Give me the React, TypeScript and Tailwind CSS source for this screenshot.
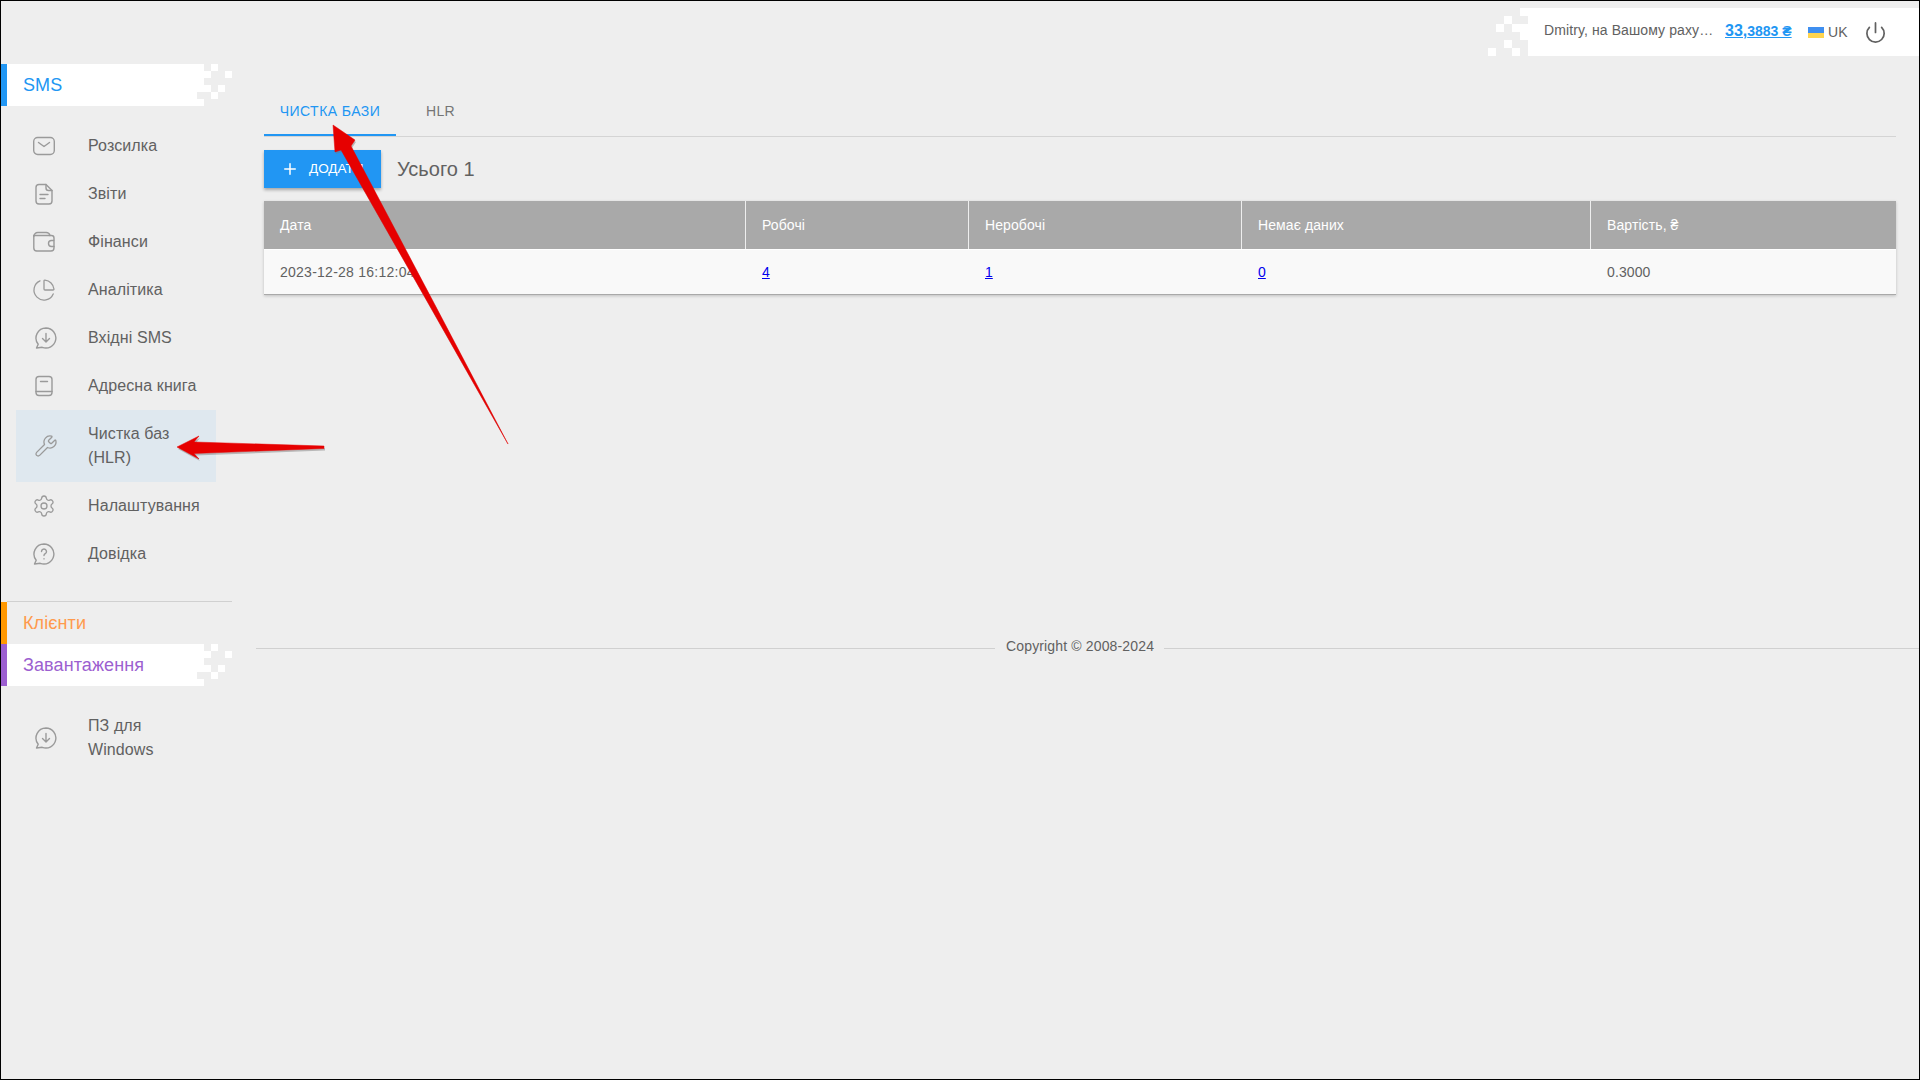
import { ReactNode } from 'react';
import { ChartPie, Plus, Power, Settings, Wrench } from 'lucide-react';

const iconClass = 'w-6 h-6 text-[#9a9a9a]';

function Svg({ children, className = '' }: { children: ReactNode; className?: string }) {
    return (
        <svg viewBox="0 0 24 24" fill="none" stroke="currentColor" strokeWidth="1.4" strokeLinecap="round" strokeLinejoin="round" className={`${iconClass} ${className}`}>
            {children}
        </svg>
    );
}

const MailIcon = () => (
    <Svg>
        <rect x="1.7" y="3.5" width="20.6" height="17" rx="4" />
        <path d="M6.5 8.5l5.5 4 5.5-4" />
    </Svg>
);

const DocIcon = () => (
    <Svg>
        <path d="M7 2.5h7l6 6v10.500a3 3 0 0 1-3 3H7a3 3 0 0 1-3-3v-13.500a3 3 0 0 1 3-3z" />
        <path d="M14 2.500v3.500a2.500 2.500 0 0 0 2.500 2.500H20" />
        <path d="M8 12.500h8M8 16.500h5" />
    </Svg>
);

const WalletIcon = () => (
    <Svg>
        <path d="M22 10V8a2.500 2.500 0 0 0-2.500-2.500H1.800" />
        <path d="M1.800 6.500a4 4 0 0 1 4-4H14a4 4 0 0 1 4 3" />
        <path d="M1.800 6v12a3 3 0 0 0 3 3H19a3 3 0 0 0 3-3v-1.500" />
        <path d="M22 10.500h-2.500a3 3 0 0 0 0 6H22z" />
    </Svg>
);

const InboxBubbleIcon = () => (
    <Svg>
        <path d="M12 2a10 10 0 1 1-3.800 19.300L2.500 22l1.700-3.800A10 10 0 0 1 12 2z" />
        <path d="M12 7.500v8M8.500 12.500l3.500 3.500 3.500-3.500" />
    </Svg>
);

const BookIcon = () => (
    <Svg>
        <rect x="4" y="2.500" width="16" height="19" rx="3" />
        <path d="M4 17.500h16M8.500 7.500h7" />
    </Svg>
);

const QuestionIcon = () => (
    <Svg>
        <path d="M12 2a10 10 0 1 1-3.800 19.300L2.500 22l1.700-3.800A10 10 0 0 1 12 2z" />
        <path d="M9.500 9.500a2.500 2.500 0 1 1 3.800 2.200c-.8.500-1.300 1-1.300 1.800" />
        <path d="M12 16.800v.1" />
    </Svg>
);

const smsItems = [
    { label: 'Розсилка', icon: <MailIcon /> },
    { label: 'Звіти', icon: <DocIcon /> },
    { label: 'Фінанси', icon: <WalletIcon /> },
    { label: 'Аналітика', icon: <ChartPie strokeWidth={1.3} className={iconClass} /> },
    { label: 'Вхідні SMS', icon: <InboxBubbleIcon />, shift: true },
    { label: 'Адресна книга', icon: <BookIcon /> },
    { label: 'Чистка баз (HLR)', icon: <Wrench strokeWidth={1.3} className={iconClass} />, active: true, shift: true },
    { label: 'Налаштування', icon: <Settings strokeWidth={1.3} className={iconClass} /> },
    { label: 'Довідка', icon: <QuestionIcon /> },
];

const columns = ['Дата', 'Робочі', 'Неробочі', 'Немає даних', 'Вартість, ₴'];

// white pixels trailing off the right edge of a section header, col/row in 7px cells
const sideCells = [[0, 0], [2, 0], [0, 1], [1, 1], [4, 1], [0, 2], [0, 3], [1, 3], [3, 3], [2, 4], [0, 5]];
// same idea for the top bar, in 8px cells
const topCells = [[4, 0], [2, 1], [1, 2], [3, 2], [4, 2], [4, 3], [2, 4], [0, 5], [3, 5]];

const longArrow = '508,444 435,305 351,146 355,140 333,125 335,152 341,150 415,280';
const shortArrow = '324,446 324,448.500 194,453.500 199,459 177,447 199,436 194,442';

function SideDecor() {
    return (
        <svg width="35" height="42" viewBox="0 0 35 42" className="shrink-0">
            {sideCells.map(([c, r]) => (
                <rect key={`${c}-${r}`} x={c * 7} y={r * 7} width="7" height="7" fill="#fff" />
            ))}
        </svg>
    );
}

function SectionHeader({ title, white, bar, text }: { title: string; white: boolean; bar: string; text: string }) {
    return (
        <div className="flex h-[42px]">
            <div className={`w-[6px] ${bar}`}></div>
            <div className={`w-[190px] pl-4 flex items-center text-[18px] tracking-[0.1px] ${text} ${white ? 'bg-white' : ''}`}>{title}</div>
            {white && <SideDecor />}
        </div>
    );
}

function MenuItem({ label, icon, active, shift }: { label: string; icon: ReactNode; active?: boolean; shift?: boolean }) {
    return (
        <div className={`mx-[15px] w-[200px] flex items-center py-3 pr-3 ${active ? 'bg-[#dfe8ef]' : ''}`}>
            <div className={`w-[56px] shrink-0 flex justify-center ${shift ? 'pl-1' : ''}`}>{icon}</div>
            <div className="ml-4 text-[16px] leading-6 tracking-[0.1px] text-[#616161]">{label}</div>
        </div>
    );
}

export default function App() {
    return (
        <div className="relative w-[1920px] h-[1080px] overflow-hidden border border-black bg-[#eeeeee] flex font-['Liberation_Sans',Arial,sans-serif]">
            <aside className="w-[231px] shrink-0 pt-[63px]">
                <SectionHeader title="SMS" white bar="bg-[#2196f3]" text="text-[#2196f3]" />
                <div className="mt-[16px] mb-[23px]">
                    {smsItems.map((item) => (
                        <MenuItem key={item.label} {...item} />
                    ))}
                </div>
                <div className="ml-[6px] h-px bg-[#d0d0d0]"></div>
                <SectionHeader title="Клієнти" white={false} bar="bg-[#ff9800]" text="text-[#ff9a4d]" />
                <SectionHeader title="Завантаження" white bar="bg-[#9c5fd0]" text="text-[#9c5fd0]" />
                <div className="mt-[16px]">
                    <MenuItem label="ПЗ для Windows" icon={<InboxBubbleIcon />} shift />
                </div>
            </aside>

            <main className="flex-1 min-w-0">
                <header className="mt-[7px] h-12 flex justify-end">
                    <svg width="40" height="48" viewBox="0 0 40 48" className="shrink-0">
                        {topCells.map(([c, r]) => (
                            <rect key={`${c}-${r}`} x={c * 8} y={r * 8} width="8" height="8" fill="#fff" />
                        ))}
                    </svg>
                    <div className="w-[391px] bg-white flex items-center pl-4 text-[#616161]">
                        <div className="w-[171px] truncate text-[14px] tracking-[0.1px] -mt-[4px]">Dmitry, на Вашому рахунку</div>
                        <a className="ml-[10px] w-[67px] -mt-[2px] font-bold text-[#2196f3] underline whitespace-nowrap text-[14px]">
                            <span className="text-[16px]">33,</span>3883 ₴
                        </a>
                        <div className="ml-4 w-4 h-[11px] flex flex-col">
                            <div className="h-[6px] bg-[#3f8ff0]"></div>
                            <div className="h-[5px] bg-[#ffd54f]"></div>
                        </div>
                        <div className="ml-[4px] text-[14px] tracking-[0.1px]">UK</div>
                        <Power strokeWidth={1.8} className="ml-[16px] w-[23px] h-[23px] text-[#616161]" />
                    </div>
                </header>

                <div className="ml-[32px] mr-[23px]">
                    <div className="mt-[30px] flex gap-[14px] border-b border-[#d4d4d4] text-[14px]">
                        <div className="h-[50px] w-[132px] pt-[2px] flex items-center justify-center border-b-2 border-[#2196f3] -mb-px text-[#2196f3] uppercase tracking-[0.45px]">Чистка бази</div>
                        <div className="h-[50px] px-4 flex items-center text-[#757575] uppercase tracking-[0.3px]">HLR</div>
                    </div>

                    <div className="mt-[13px] flex items-center">
                        <button className="w-[117px] h-[38px] flex items-center pl-[17px] gap-[10px] bg-[#2196f3] text-white text-[13.5px] uppercase shadow-[0_2px_3px_rgba(0,0,0,0.3)]">
                            <Plus strokeWidth={2} className="w-[18px] h-[18px]" />
                            Додати
                        </button>
                        <div className="ml-4 text-[20px] text-[#616161]">Усього 1</div>
                    </div>

                    <div className="mt-[13px] bg-[#f9f9f9] border-b border-[#a9a9a9] shadow-[0_1px_3px_rgba(0,0,0,0.2)] text-[14px]">
                        <div className="grid grid-cols-[482px_223px_273px_349px_1fr] h-[49px] border-b border-white">
                            {columns.map((name, index) => (
                                <div key={name} className={`bg-[#a9a9a9] text-white px-4 flex items-center tracking-[0.1px] ${index < columns.length - 1 ? 'border-r border-[#eeeeee]' : ''}`}>
                                    {name}
                                </div>
                            ))}
                        </div>
                        <div className="grid grid-cols-[482px_223px_273px_349px_1fr] h-[44px] items-center text-[#616161]">
                            <div className="px-4 tracking-[0.25px]">2023-12-28 16:12:04</div>
                            <div className="px-4"><a className="text-[#0000ee] underline">4</a></div>
                            <div className="px-4"><a className="text-[#0000ee] underline">1</a></div>
                            <div className="px-4"><a className="text-[#0000ee] underline">0</a></div>
                            <div className="px-4 tracking-[0.1px]">0.3000</div>
                        </div>
                    </div>
                </div>

                <footer className="mt-[341px] ml-6 flex items-center h-5 text-[14px] text-[#616161]">
                    <div className="w-[739px] h-px mt-1 bg-[#d0d0d0]"></div>
                    <div className="pl-[11px] pr-[10px] whitespace-nowrap tracking-[0.15px]">Copyright © 2008-2024</div>
                    <div className="flex-1 h-px mt-1 bg-[#d0d0d0]"></div>
                </footer>
            </main>

            {/* red annotation arrows drawn over the page */}
            <svg className="absolute -left-px -top-px pointer-events-none" width="1920" height="1080" viewBox="0 0 1920 1080">
                <g fill="#777" opacity="0.45" transform="translate(1 2)">
                    <polygon points={longArrow} />
                    <polygon points={shortArrow} />
                </g>
                <g fill="#e60000" stroke="#e60000" strokeWidth="0.5" strokeLinejoin="round">
                    <polygon points={longArrow} />
                    <polygon points={shortArrow} />
                </g>
            </svg>
        </div>
    );
}
